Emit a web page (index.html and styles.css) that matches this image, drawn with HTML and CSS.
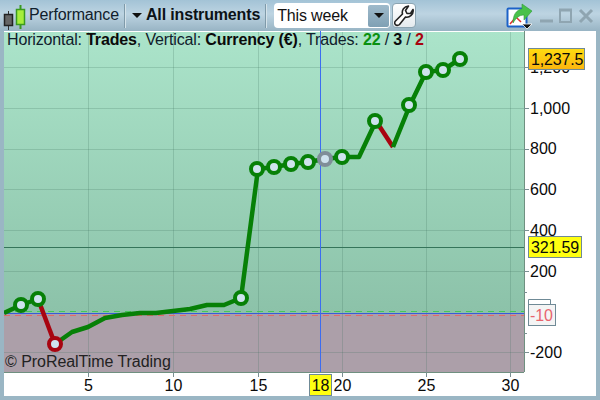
FILE: index.html
```html
<!DOCTYPE html>
<html lang="en">

<head>
    <meta charset="UTF-8">
    <title>Performance</title>
    <link rel="stylesheet" href="styles.css">
</head>

<body>
    <div class="window">
        <div class="toolbar">
            <svg class="candle-icon" width="26" height="30" viewBox="0 0 26 30">
                <path d="M5.500 10v19" stroke="#333" fill="none"/>
                <rect x="1.500" y="13.500" width="8" height="11" fill="#666" stroke="#222" stroke-width="1.500"/>
                <path d="M17.500 4v24" stroke="#3a9a20" stroke-width="2" fill="none"/>
                <rect x="13.500" y="8.500" width="8" height="15" fill="#a6ee3c" stroke="#3a9a20" stroke-width="1.500"/>
            </svg>
            <span class="tool-title">Performance</span>
            <span class="sep"></span>
            <span class="arrow"></span>
            <span class="tool-title bold">All instruments</span>
            <span class="sep"></span>
            <div class="select">
                <span class="select-text">This week</span>
                <span class="select-btn"><span class="arrow"></span></span>
            </div>
            <button class="wrench-btn">
                <svg width="20" height="22" viewBox="0 0 20 22">
                    <path d="M1.500 16L8.500 9C7.500 5 10 1.500 14.500 1L11.500 5.500L13 8.500L16.500 8.500L19 4.500C20 9 15.500 13 11.500 12L5.500 19.500C4 21 1.500 20.500 1 19C.5 18 .5 17 1.500 16z" fill="#fff" stroke="#222" stroke-width="1.600" stroke-linejoin="round"/>
                </svg>
            </button>
            <div class="win-tools">
                <svg class="export-icon" width="28" height="30" viewBox="0 0 28 30">
                    <rect x="2.500" y="6.500" width="19" height="18" rx="1" fill="#fff" stroke="#1c62c8" stroke-width="2"/>
                    <path d="M5 22l6-7 5 5" fill="none" stroke="#e03030" stroke-width="1.500"/>
                    <path d="M17 2L27 9L19 18V13C14 13 11 16 8 21C8 13 11 8 17 7z" fill="#49c14a" stroke="#2b9a35" stroke-width=".6"/>
                    <path d="M17 22h10l-5 5z" fill="#111" stroke="#fff" stroke-width=".8"/>
                </svg>
                <svg width="56" height="20" viewBox="0 0 56 20">
                    <path d="M1 15h13" stroke="#8fa5b1" stroke-width="3"/>
                    <rect x="21" y="4" width="11" height="12" fill="none" stroke="#8fa5b1" stroke-width="2"/>
                    <path d="M20 4h13" stroke="#8fa5b1" stroke-width="3"/>
                    <path d="M41 4l12 12M53 4L41 16" stroke="#8fa5b1" stroke-width="3"/>
                </svg>
            </div>
        </div>

        <div class="workspace">
            <svg class="canvas" width="592" height="365" viewBox="4 31 592 365">
                <defs>
                    <linearGradient id="profit" x1="0" y1="0" x2="0" y2="1">
                        <stop offset="0" stop-color="#abe4ca"/>
                        <stop offset="1" stop-color="#8cc2a9"/>
                    </linearGradient>
                    <linearGradient id="goldTag" x1="0" y1="0" x2="0" y2="1">
                        <stop offset="0" stop-color="#ffdc10"/>
                        <stop offset="1" stop-color="#fbb50f"/>
                    </linearGradient>
                </defs>
                <rect x="4" y="32" width="520" height="281" fill="url(#profit)"/>
                <rect x="4" y="313" width="520" height="59" fill="#ac9fa9"/>

                <g class="grid">
                    <path d="M88.500 32v340M173.500 32v340M258.500 32v340M342.500 32v340M426.500 32v340M510.500 32v340"/>
                    <path d="M4 67.500h520M4 108.500h520M4 149.500h520M4 189.500h520M4 230.500h520M4 271.500h520M4 352.500h520"/>
                </g>

                <path d="M4 247.500h520" stroke="#35745a" fill="none"/>
                <path d="M4 311.500h520" stroke="#46c65a" stroke-dasharray="6 5" fill="none"/>
                <path d="M4 313.500h520" stroke="#3a5ad8" fill="none"/>
                <path d="M4 315.500h520" stroke="#e06a6a" stroke-dasharray="6 5" fill="none"/>
                <path d="M320.500 31v341" stroke="#3c6cf0" fill="none"/>
                <path d="M524.500 31v341M4 372.500h520" stroke="#6f9080" fill="none"/>

                <g class="ticks">
                    <path d="M88.500 372v5M173.500 372v5M258.500 372v5M342.500 372v5M426.500 372v5M510.500 372v5"/>
                    <path d="M524 67.500h5M524 108.500h5M524 149.500h5M524 189.500h5M524 230.500h5M524 271.500h5M524 292.500h3M524 333.500h3M524 352.500h5"/>
                </g>

                <path class="line win" d="M4 313L21 305L38 299"/>
                <path class="line loss" d="M38 299L55 344"/>
                <path class="line win" d="M55 344L72 332L88 327L105 318L122 315L140 313L156 313L173 311L190 309L207 305L224 305L241 298L258 169L274 167L291 164L308 162L325 159L342 157L359 157L376 121"/>
                <path class="line loss" d="M376 121L393 147"/>
                <path class="line win" d="M393 147L410 105L426 72L443 70L460 59"/>

                <g class="dots">
                    <circle cx="21" cy="305" r="6"/>
                    <circle cx="38" cy="299" r="6"/>
                    <circle class="dot-loss" cx="55" cy="344" r="6"/>
                    <circle cx="241" cy="298" r="6"/>
                    <circle cx="257" cy="169" r="6"/>
                    <circle cx="274" cy="167" r="6"/>
                    <circle cx="291" cy="164" r="6"/>
                    <circle cx="308" cy="162" r="6"/>
                    <circle class="dot-hover" cx="325" cy="159" r="6"/>
                    <circle cx="342" cy="157" r="6"/>
                    <circle cx="375" cy="121" r="6"/>
                    <circle cx="409" cy="105" r="6"/>
                    <circle cx="426" cy="72" r="6"/>
                    <circle cx="443" cy="70" r="6"/>
                    <circle cx="460" cy="59" r="6"/>
                </g>

                <g class="labels">
                    <text x="530" y="114">1,000</text>
                    <text x="530" y="154">800</text>
                    <text x="530" y="195">600</text>
                    <text x="530" y="236">400</text>
                    <text x="530" y="277">200</text>
                    <text x="530" y="358">-200</text>
                    <text x="530" y="73">1,200</text>
                </g>
                <g class="labels middle">
                    <text x="88.500" y="391">5</text>
                    <text x="173.500" y="391">10</text>
                    <text x="258.500" y="391">15</text>
                    <text x="342.500" y="391">20</text>
                    <text x="426.500" y="391">25</text>
                    <text x="510.500" y="391">30</text>
                </g>

                <rect class="tag gold" x="528.500" y="48.500" width="56" height="21"/>
                <text class="tag-text" x="531" y="65">1,237.5</text>
                <rect class="tag yellow" x="528.500" y="236.500" width="53" height="21"/>
                <text class="tag-text" x="531" y="253">321.59</text>
                <path class="tag-back" d="M528.500 304v-4.500h22v4.500"/>
                <rect class="tag pale" x="528.500" y="304.500" width="27" height="21"/>
                <text class="tag-text red" x="530" y="321">-10</text>
                <rect class="tag yellow" x="309.500" y="374.500" width="22" height="21"/>
                <text class="tag-text" x="320.500" y="391" text-anchor="middle">18</text>
            </svg>
            <div class="legend">Horizontal: <b>Trades</b>, Vertical: <b>Currency (€)</b>, Trades: <b class="green">22</b> / <b>3</b> / <b class="dark-red">2</b></div>
            <div class="copyright">© ProRealTime Trading</div>
        </div>
    </div>
</body>

</html>
```

FILE: styles.css
```css
* {
    margin: 0;
    padding: 0;
    box-sizing: border-box;
}

body {
    font-family: "Liberation Sans", Arial, sans-serif;
    font-size: 16px;
    letter-spacing: -0.15px;
    color: #111;
}

.window {
    width: 600px;
    height: 400px;
    background: #9ab6c4;
    padding: 0 4px 4px;
    display: flex;
    flex-direction: column;
    overflow: hidden;
}

.toolbar {
    height: 31px;
    margin: 0 -4px;
    padding-left: 3px;
    display: flex;
    align-items: center;
    background: linear-gradient(#a3c3d6, #bdd4e2 45%, #98b4c4);
}

.candle-icon {
    flex: none;
}

.tool-title {
    white-space: nowrap;
    color: #10202c;
    margin-top: -1px;
}

.bold {
    font-weight: bold;
    color: #0b1216;
}

.sep {
    width: 2px;
    height: 24px;
    margin-left: 5px;
    margin-right: 6px;
    background: #7f9aa9;
    border-right: 1px solid #d5e3ea;
}

.arrow {
    width: 0;
    height: 0;
    border-left: 5px solid transparent;
    border-right: 5px solid transparent;
    border-top: 5px solid #111;
    margin-right: 4px;
}

.select {
    width: 116px;
    height: 25px;
    margin-left: 1px;
    background: #fff;
    border-radius: 4px;
    display: flex;
    align-items: center;
    justify-content: space-between;
    padding: 1px;
}

.select-text {
    padding-left: 2px;
}

.select-btn {
    width: 21px;
    height: 22px;
    background: linear-gradient(#9fbacb, #7fa0b4);
    border-radius: 2px;
    display: flex;
    align-items: center;
    justify-content: center;
}

.select-btn .arrow {
    margin: 0;
}

.wrench-btn {
    width: 24px;
    height: 25px;
    margin-left: 2px;
    border: 1px solid #8ba4b2;
    border-radius: 4px;
    background: linear-gradient(#fff, #e4eaee);
    display: flex;
    align-items: center;
    justify-content: center;
}

.win-tools {
    margin-left: auto;
    margin-right: 5px;
    display: flex;
    align-items: center;
}

.export-icon {
    margin-top: 2px;
    margin-right: 6px;
}

.workspace {
    position: relative;
    flex: 1;
    background: #fff;
}

.canvas {
    display: block;
}

.grid path {
    fill: none;
    stroke: #3d6f5c;
    stroke-opacity: 0.22;
}

.ticks path {
    fill: none;
    stroke: #7a8f92;
}

.line {
    fill: none;
    stroke-width: 4.5;
    stroke-linejoin: round;
}

.win {
    stroke: #078007;
}

.loss {
    stroke: #a80410;
}

.dots circle {
    fill: #cfe3ee;
    stroke: #078007;
    stroke-width: 4;
}

.dots .dot-loss {
    stroke: #a80410;
}

.dots .dot-hover {
    stroke: #7f8e98;
}

.labels text {
    fill: #0a0a0a;
    letter-spacing: 0;
}

.labels.middle text {
    text-anchor: middle;
}

.tag {
    stroke: #6f8a96;
}

.gold {
    fill: url(#goldTag);
}

.yellow {
    fill: #ffff11;
}

.pale {
    fill: #f4f4f4;
}

.tag-back {
    fill: #fff;
    stroke: #6f8a96;
}

.tag-text {
    fill: #0a0a0a;
}

.tag-text.red {
    fill: #e8646e;
}

.legend {
    position: absolute;
    left: 3px;
    top: 0;
    white-space: nowrap;
    color: #10202c;
}

.legend b {
    color: #0b0b0b;
}

.legend .green {
    color: #0a9010;
}

.legend .dark-red {
    color: #a80410;
}

.copyright {
    position: absolute;
    left: 1px;
    top: 322px;
    letter-spacing: -0.05px;
    white-space: nowrap;
    color: #222;
}
```
